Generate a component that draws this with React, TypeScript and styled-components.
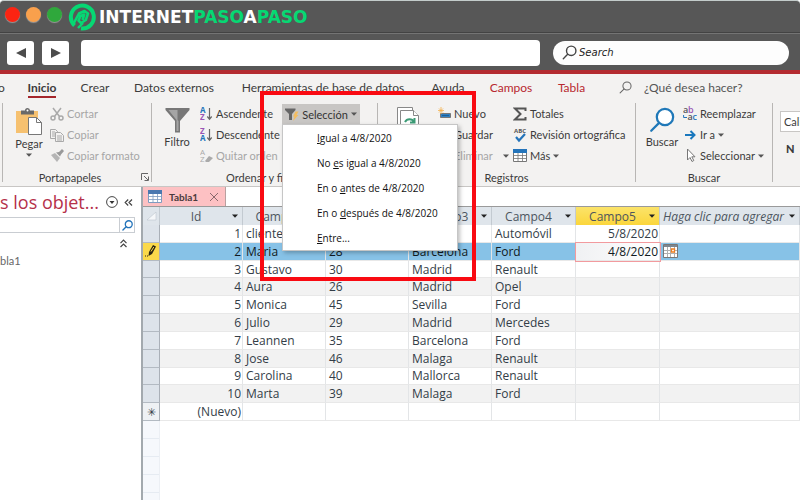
import React from "react";
import styled, { createGlobalStyle, css } from "styled-components";

const GlobalStyle = createGlobalStyle`
  * { box-sizing: border-box; }
  body {
    margin: 0;
    background: #fff;
    font-family: Lato, "Open Sans", sans-serif;
    font-size: 11px;
    color: #3c3c3c;
  }
  button, input {
    font: inherit;
    color: inherit;
    margin: 0;
    padding: 0;
    border: 0;
    background: none;
  }
  svg { display: block; flex: none; }
`;

const Page = styled.div`
  position: relative;
  display: flex;
  flex-direction: column;
  min-height: 100vh;
  overflow: hidden;
  white-space: nowrap;
`;

/* ---------- browser frame ---------- */

const TitleBar = styled.header`
  display: flex;
  align-items: center;
  height: 33px;
  padding: 0 5px;
  gap: 6px;
  background: #575757;
  border-top: 1px solid #c3cccb;
  border-bottom: 1px solid #434343;
  border-radius: 4px 4px 0 0;
`;

const Light = styled.button<{ $color: string }>`
  width: 15px;
  height: 15px;
  margin-bottom: 4px;
  border-radius: 50%;
  background: ${(p) => p.$color};
  box-shadow: 0 1px 1px #999;
`;

const Brand = styled.div`
  display: flex;
  align-items: center;
  gap: 3px;
  font-family: "DejaVu Sans", sans-serif;
  font-size: 17px;
  line-height: 20px;
  font-weight: 700;
  color: #fff;
`;

const BrandAccent = styled.span`
  color: #06d873;
`;

const AddressBar = styled.div`
  display: flex;
  align-items: center;
  height: 37px;
  padding: 1px 11px 0 7px;
  background: #575757;
  border-top: 1px solid #747474;
`;

const NavButton = styled.button`
  display: flex;
  align-items: center;
  justify-content: center;
  width: 27px;
  height: 24px;
  margin-right: 8px;
  border-radius: 3px;
  background: #fff;
`;

const UrlInput = styled.input`
  flex: 459 1 0;
  min-width: 0;
  height: 26px;
  margin: 0 13px 0 4px;
  border-radius: 4px;
  background: #fff;
`;

const SearchPill = styled.label`
  display: flex;
  align-items: center;
  flex: 227 1 0;
  min-width: 0;
  height: 24px;
  padding-left: 9px;
  gap: 2px;
  border-radius: 12px;
  background: #fdfdfd;
`;

const SearchInput = styled.input`
  flex: 1;
  min-width: 0;
  font-family: "DejaVu Sans", sans-serif;
  font-size: 10px;
  font-style: italic;
  outline: 0;
  &::placeholder { color: #222; opacity: 1; }
`;

/* ---------- ribbon ---------- */

const Ribbon = styled.section`
  background: #f3f2f1;
  border-top: 4px solid #b32b30;
  border-bottom: 1px solid #c8c6c4;
`;

const Tabs = styled.nav`
  display: flex;
  height: 29px;
  padding-top: 2px;
  gap: 25px;
  font-size: 12px;
`;

const Tab = styled.button<{ $w: number; $tone?: "active" | "context" }>`
  width: ${(p) => p.$w}px;
  height: 22px;
  display: flex;
  align-items: center;
  justify-content: center;
  ${(p) =>
    p.$tone === "active" &&
    css`
      font-weight: 700;
      color: #3b3b3b;
      border-bottom: 2px solid #a4262c;
      padding-top: 2px;
    `}
  ${(p) =>
    p.$tone === "context" &&
    css`
      color: #b8282f;
    `}
`;

const TellMe = styled.button`
  display: flex;
  align-items: center;
  gap: 12px;
  height: 22px;
  margin-left: 9px;
  color: #555;
`;

const Groups = styled.div`
  display: grid;
  grid-template-columns: 3px 149px 226px 258px 137px 1fr;
  padding-bottom: 4px;
`;

const Group = styled.div`
  display: flex;
  flex-direction: column;
  min-width: 0;
  height: 79px;
  border-right: 1px solid #b8b6b4;
  &:last-child { border-right: 0; }
`;

const GroupBody = styled.div<{ $pad?: number }>`
  display: flex;
  align-items: flex-start;
  flex: none;
  height: 67px;
  padding-left: ${(p) => p.$pad ?? 10}px;
`;

const GroupLabel = styled.div<{ $launcher?: boolean }>`
  position: relative;
  display: flex;
  justify-content: center;
  line-height: 16px;
  padding-right: ${(p) => (p.$launcher ? 14 : 0)}px;
`;

const Launcher = styled.button`
  position: absolute;
  right: 2px;
  top: 3px;
`;

const BigButton = styled.button<{ $w: number }>`
  display: flex;
  flex-direction: column;
  align-items: center;
  width: ${(p) => p.$w}px;
  padding-top: 4px;
  gap: 2px;
  line-height: 14px;
`;

const Stack = styled.div<{ $left?: number; $w?: number }>`
  display: flex;
  flex-direction: column;
  align-items: flex-start;
  margin-left: ${(p) => p.$left ?? 0}px;
  ${(p) => p.$w && `width: ${p.$w}px;`}
`;

const Command = styled.button`
  display: flex;
  align-items: center;
  height: 21px;
  gap: 3px;
  &:disabled { color: #a6a6a6; }
`;

const SelectionWrap = styled.div`
  position: relative;
  padding-top: 1px;
`;

const SelectionButton = styled.button`
  display: flex;
  align-items: center;
  justify-content: center;
  gap: 3px;
  width: 78px;
  height: 20px;
  background: #c8c6c4;
  color: #333;
`;

const Menu = styled.div`
  position: absolute;
  top: 21px;
  left: 0;
  z-index: 2;
  width: 176px;
  display: flex;
  flex-direction: column;
  background: #fff;
  border: 1px solid #c6c6c6;
  box-shadow: 2px 2px 4px rgba(0, 0, 0, 0.25);
`;

const MenuItem = styled.button`
  height: 25px;
  padding-left: 34px;
  text-align: left;
  font-family: "Open Sans", sans-serif;
  font-size: 10px;
  color: #111;
`;

const FontInput = styled.input`
  width: 90px;
  height: 21px;
  margin-top: 8px;
  padding-left: 3px;
  border: 1px solid #c8c6c4;
  background: #fff;
`;

const FontTools = styled.div`
  display: flex;
  flex-direction: column;
  align-items: flex-start;
  overflow: hidden;
`;

const BoldButton = styled.button`
  margin: 9px 0 0 6px;
  font-weight: 900;
  line-height: 16px;
`;

/* ---------- workspace ---------- */

const Workspace = styled.main`
  display: flex;
  flex: 1;
`;

const NavPane = styled.aside`
  width: 141px;
  flex: none;
  padding-right: 6px;
`;

const PaneHeader = styled.div`
  display: flex;
  align-items: center;
  justify-content: space-between;
  height: 30px;
`;

const PaneTitle = styled.h2`
  margin: 0;
  font-family: "Open Sans", sans-serif;
  font-size: 18px;
  line-height: 26px;
  font-weight: 400;
  color: #b5304a;
`;

const PaneTools = styled.div`
  display: flex;
  align-items: center;
  gap: 6px;
  padding-right: 2px;
`;

const PaneSearch = styled.div`
  display: flex;
  height: 16px;
  border: 1px solid #c9cdd2;
  border-left: 0;
`;

const PaneInput = styled.input`
  flex: 1;
  min-width: 0;
`;

const PaneSearchButton = styled.button`
  display: flex;
  align-items: center;
  justify-content: center;
  width: 15px;
  border-left: 1px solid #c9cdd2;
`;

const CollapseButton = styled.button`
  display: flex;
  margin: 6px 7px 0 auto;
`;

const PaneItem = styled.a`
  display: block;
  margin-top: 6px;
  line-height: 14px;
  color: #666;
  text-decoration: none;
`;

const DocPane = styled.section`
  display: flex;
  flex-direction: column;
  flex: 1;
  min-width: 0;
  border-left: 2px solid #a3a9ae;
`;

const DocTabs = styled.div`
  height: 20px;
  border-bottom: 1px solid #9a9a9a;
`;

const DocTab = styled.div`
  display: flex;
  align-items: center;
  width: 83px;
  height: 19px;
  padding: 0 6px 0 5px;
  background: #fdc1c3;
  border-right: 1px solid #b9a0a0;
  font-size: 10px;
  font-weight: 700;
  color: #4a3a3c;
`;

const DocTabName = styled.span`
  flex: 1;
  padding-left: 7px;
`;

const DataTable = styled.table`
  width: 100%;
  height: 214px;
  table-layout: fixed;
  border-collapse: separate;
  border-spacing: 0;
  font-family: "Open Sans", sans-serif;
  font-size: 12px;
  line-height: 15px;
  color: #333d47;
`;

const HeadCell = styled.th<{ $active?: boolean }>`
  height: 18px;
  padding: 0;
  font-weight: 400;
  color: #4d555e;
  background: ${(p) => (p.$active ? "linear-gradient(#fbe36a, #fbd63c)" : "#dfe5eb")};
  border-right: 1px solid #c3cad1;
`;

const HeadInner = styled.div`
  display: flex;
  align-items: center;
  padding: 0 4px 0 0;
`;

const HeadName = styled.span<{ $add?: boolean }>`
  flex: 1;
  text-align: center;
  ${(p) =>
    p.$add &&
    css`
      text-align: left;
      padding-left: 3px;
      font-style: italic;
    `}
`;

const Row = styled.tr<{ $state?: "even" | "selected" }>`
  background: ${(p) =>
    p.$state === "selected" ? "#87c2e7" : p.$state === "even" ? "#f2f2f2" : "#fff"};
  color: ${(p) => (p.$state === "selected" ? "#111a22" : "inherit")};
`;

const Cell = styled.td<{ $right?: boolean; $focus?: boolean }>`
  padding: 0 1px 0 3px;
  text-align: ${(p) => (p.$right ? "right" : "left")};
  border-right: 1px solid #e3e5e7;
  border-bottom: 1px solid #e8e8e8;
  ${(p) =>
    p.$focus &&
    css`
      background: linear-gradient(90deg, #f0f1f3, #fff);
      outline: 1px solid #f29a9e;
    `}
`;

const Selector = styled.th<{ $current?: boolean; $blank?: boolean }>`
  padding: 0;
  background: ${(p) => (p.$current ? "#fbd94b" : p.$blank ? "#eef1f4" : "#dde3ea")};
  border-right: 1px solid #aab0b8;
  border-bottom: 1px solid #b3bac2;
  font-weight: 400;
  font-size: 11px;
  & > svg { margin: 0 auto; }
`;

const EmptyGutter = styled.div`
  flex: 1;
  width: 17px;
  background: repeating-linear-gradient(#f6f8fc 0 17px, #e6ebf2 17px 18px);
  border-right: 1px solid #eceff4;
`;

/* Tutorial highlight drawn over the filter menu. */
const Highlight = styled.div`
  position: absolute;
  top: 91px;
  left: 260px;
  width: 216px;
  height: 190px;
  z-index: 3;
  border: 4px solid #f90a12;
  pointer-events: none;
`;

/* ---------- icons ---------- */

const Caret = ({ c = "#555" }: { c?: string }) => (
  <svg width="6" height="4" viewBox="0 0 6 4"><path d="M0 0.5h6L3 3.7z" fill={c} /></svg>
);

const Lens = ({ size, color, width = 1.3, fill = "none" }: { size: number; color: string; width?: number; fill?: string }) => (
  <svg width={size} height={size} viewBox="0 0 14 14" fill={fill} stroke={color} strokeWidth={width} strokeLinecap="round">
    <circle cx="8.6" cy="5.4" r="4.4" /><path d="M5.3 8.7L1.2 12.8" />
  </svg>
);

const Logo = () => (
  <svg width="28" height="28" viewBox="0 0 28 28" fill="none" stroke="#06d873">
    <path d="M6.500 22.500A11.500 11.500 0 1 1 13 25.500" strokeWidth="4" />
    <path d="M5 21.500L11 10.500L16.500 8L20 10.500L17.800 17L13 20L10.500 17.500L12.500 13L16.200 11.500L14.500 17" strokeWidth="2.600" strokeLinejoin="round" />
    <path d="M10 25L15 20" strokeWidth="2.400" />
  </svg>
);

const Clipboard = () => (
  <svg width="26" height="28" viewBox="0 0 26 28">
    <path d="M0 4h22v22H0z" fill="#f6c170" />
    <path d="M5 3.5h4a2.5 2.5 0 0 1 5 0h4v4H5z" fill="#696969" /><circle cx="11.5" cy="3.4" r="1" fill="#fff" />
    <path d="M12.5 10.5h8l5 5v12h-13z" fill="#fff" stroke="#777" /><path d="M20.5 10.5v5h5" fill="none" stroke="#777" />
  </svg>
);

const Scissors = () => (
  <svg width="14" height="14" viewBox="0 0 14 14" fill="none" stroke="#a9a9a9" strokeWidth="1.5">
    <path d="M3 1l6.5 8.5M11 1L4.5 9.5" /><circle cx="3" cy="11" r="2" /><circle cx="11" cy="11" r="2" />
  </svg>
);

const CopyIcon = () => (
  <svg width="14" height="14" viewBox="0 0 14 14" fill="#f3f2f1" stroke="#a9a9a9">
    <path d="M.5 1.5h5l2 2v7h-7z" /><path d="M2 4h3M2 6h3M2 8h3" />
    <path d="M5.500 4.500h5l3 3v6h-8z" /><path d="M7 8h5M7 10h5M7 12h5" />
  </svg>
);

const Brush = () => (
  <svg width="14" height="14" viewBox="0 0 14 14">
    <path d="M1 6l4-2 5 5-3 4z" fill="#b5b5b5" /><path d="M6 3.500l4 4 1-2 3-3.500-2-2-3 3z" fill="#999" />
  </svg>
);

const Funnel = () => (
  <svg width="25" height="26" viewBox="0 0 25 26">
    <path d="M.5 1h24v2L15 14v11.500h-5V14L.5 3z" fill="#777" /><path d="M3.500 3h9v10l1 1v10h-2V13z" fill="#a5a5a5" />
  </svg>
);

const FunnelBolt = () => (
  <svg width="14" height="13" viewBox="0 0 14 13">
    <path d="M0 .5h10.500v1.500L7 6v6H4V6L0 2z" fill="#666" /><path d="M10.500 3.500h3L11.500 7h2L8 13l1.500-4.500H8z" fill="#f3bd60" />
  </svg>
);

const SortIcon = ({ top, bottom, topColor, bottomColor }: { top: string; bottom: string; topColor: string; bottomColor: string }) => (
  <svg width="13" height="16" viewBox="0 0 13 16" fontFamily="Open Sans, sans-serif" fontSize="8" fontWeight="700">
    <text x="0" y="7" fill={topColor}>{top}</text><text x="0" y="14" fill={bottomColor}>{bottom}</text>
    <path d="M9.500 2v11M7.300 10.500l2.200 2.700 2.200-2.700" stroke="#666" strokeWidth="1.200" fill="none" />
  </svg>
);

const ClearSort = () => (
  <svg width="13" height="16" viewBox="0 0 13 16" fontFamily="Open Sans, sans-serif" fontSize="8" fill="#aaa">
    <text x="0" y="7">A</text><text x="0" y="14">Z</text><path d="M5 13l4-5 4 2-4 4H6z" />
  </svg>
);

const RefreshDoc = () => (
  <svg width="24" height="27" viewBox="0 0 24 27" fill="#fff" stroke="#888">
    <path d="M.5.500h15v21H.5z" /><path d="M3.500 3.500h13l5 5v18h-18z" /><path d="M16.500 3.500v5h5" />
    <path d="M8 15a5 5 0 0 1 9 0M17.500 11v4.500H13M17 20a5 5 0 0 1-9 0" fill="none" stroke="#3c9b76" strokeWidth="2" />
  </svg>
);

const NewRecord = () => (
  <svg width="13" height="14" viewBox="0 0 13 14">
    <path d="M2.500 6.500h10v4h-10z" fill="#2f7fc1" stroke="#777" /><path d="M4 8.500h7" stroke="#195f9b" />
    <path d="M3 0v7M0 3.500h6M1 1.500l4 4M5 1.500l-4 4" stroke="#f2b04c" strokeWidth=".8" />
  </svg>
);

const Blank = ({ w = 13 }: { w?: number }) => <svg width={w} height="14" />;

const Sigma = () => (
  <svg width="14" height="14" viewBox="0 0 14 14" fill="none" stroke="#555" strokeWidth="2">
    <path d="M12.500 4V1.500H2L7.500 7L2 12.500h10.500V10" />
  </svg>
);

const Spelling = () => (
  <svg width="14" height="16" viewBox="0 0 14 16">
    <text x="1" y="5.500" fontFamily="Open Sans, sans-serif" fontSize="6" fontWeight="700" fill="#555">ABC</text>
    <path d="M3 10l3 3.500L12 7" fill="none" stroke="#2474ba" strokeWidth="2.200" />
  </svg>
);

const GridIcon = ({ head = "#2474ba", line = "#777" }: { head?: string; line?: string }) => (
  <svg width="14" height="13" viewBox="0 0 14 13">
    <path d="M.5.500h13v12H.5z" fill="#fff" stroke={line} /><path d="M0 0h14v4H0z" fill={head} />
    <path d="M0 6.500h14M0 9.500h14M5 4v9M9.500 4v9" stroke={line} strokeWidth=".8" />
  </svg>
);

const ReplaceIcon = () => (
  <svg width="14" height="15" viewBox="0 0 14 15" fontFamily="Open Sans, sans-serif" fontSize="9" fontWeight="600">
    <text x="0" y="7" fill="#555">a</text><text x="5" y="7" fill="#9a55b5">b</text>
    <text x="4.500" y="14" fill="#555">a</text><text x="9.500" y="14" fill="#2474ba">c</text>
    <path d="M.6 9v2.500H4" stroke="#2474ba" fill="none" />
  </svg>
);

const GoIcon = () => (
  <svg width="14" height="12" viewBox="0 0 14 12" fill="none" stroke="#1977bd" strokeWidth="2">
    <path d="M2 6h9M7.500 2l4 4-4 4" />
  </svg>
);

const Pointer = () => (
  <svg width="14" height="15" viewBox="0 0 14 15" fill="#fff" stroke="#777">
    <path d="M4.500 1v11l2.500-2.500 2 4 1.800-1-2-3.700H12z" />
  </svg>
);

const Pencil = () => (
  <svg width="12" height="14" viewBox="0 0 12 14">
    <path d="M4 8l4-7 3 1.500L7 10l-3.500 2z" fill="#2d2714" /><path d="M6 7.500L8.800 3" stroke="#fbd94b" />
    <path d="M0 12h3" stroke="#2d2714" strokeDasharray="1 1" />
  </svg>
);

const CalendarIcon = () => (
  <svg width="15" height="14" viewBox="0 0 15 14">
    <path d="M.5.500h14v13H.5z" fill="#fff" stroke="#777" /><path d="M1 1h13v2H1z" fill="#7c8790" />
    <path d="M1 6.500h13M1 9.500h13M4.500 3v10M7.500 3v10M11.500 3v10" stroke="#b0b0b0" />
    <path d="M8.500 5h3v3h-3z" fill="#fff" stroke="#ee7f21" strokeWidth="1.300" />
  </svg>
);

const Chevrons = ({ up }: { up?: boolean }) => (
  <svg width="9" height="9" viewBox="0 0 9 9" fill="none" stroke="#444" strokeWidth="1.200">
    <path d={up ? "M1.500 4.200l3-3 3 3M1.500 8l3-3 3 3" : "M4.200 1.500l-3 3 3 3M8 1.500l-3 3 3 3"} />
  </svg>
);

/* ---------- data ---------- */

const rows = [
  ["1", "cliente", "25", "Leon", "Automóvil", "5/8/2020"],
  ["2", "Maria", "28", "Barcelona", "Ford", "4/8/2020"],
  ["3", "Gustavo", "30", "Madrid", "Renault", ""],
  ["4", "Aura", "26", "Madrid", "Opel", ""],
  ["5", "Monica", "45", "Sevilla", "Ford", ""],
  ["6", "Julio", "29", "Madrid", "Mercedes", ""],
  ["7", "Leannen", "35", "Barcelona", "Ford", ""],
  ["8", "Jose", "46", "Malaga", "Renault", ""],
  ["9", "Carolina", "40", "Mallorca", "Renault", ""],
  ["10", "Marta", "39", "Malaga", "Ford", ""],
  ["(Nuevo)", "", "", "", "", ""],
];

const heads = ["Id", "Campo1", "Campo2", "Campo3", "Campo4", "Campo5"];

export default function App() {
  return (
    <>
      <GlobalStyle />
      <Page>
        <TitleBar>
          <Light $color="#fb2412" aria-label="Cerrar" />
          <Light $color="#f9a04c" aria-label="Minimizar" />
          <Light $color="#2fa83c" aria-label="Maximizar" />
          <Brand>
            <Logo />
            <span>INTERNET<BrandAccent>PASO</BrandAccent>A<BrandAccent>PASO</BrandAccent></span>
          </Brand>
        </TitleBar>
        <AddressBar>
          <NavButton aria-label="Atrás"><svg width="10" height="10" viewBox="0 0 10 10"><path d="M10 0v10L0 5z" fill="#4c4c4c" /></svg></NavButton>
          <NavButton aria-label="Adelante"><svg width="10" height="10" viewBox="0 0 10 10"><path d="M0 0v10l10-5z" fill="#4c4c4c" /></svg></NavButton>
          <UrlInput aria-label="Dirección" />
          <SearchPill>
            <Lens size={15} color="#444" />
            <SearchInput placeholder="Search" aria-label="Search" />
          </SearchPill>
        </AddressBar>

        <Ribbon>
          <Tabs>
            <Tab $w={3} aria-label="Archivo">o</Tab>
            <Tab $w={28} $tone="active">Inicio</Tab>
            <Tab $w={28}>Crear</Tab>
            <Tab $w={80}>Datos externos</Tab>
            <Tab $w={168}>Herramientas de base de datos</Tab>
            <Tab $w={32}>Ayuda</Tab>
            <Tab $w={44} $tone="context">Campos</Tab>
            <Tab $w={27} $tone="context">Tabla</Tab>
            <TellMe><Lens size={13} color="#666" width={1.1} />¿Qué desea hacer?</TellMe>
          </Tabs>
          <Groups>
            <Group />
            <Group>
              <GroupBody>
                <BigButton $w={32}><Clipboard />Pegar<Caret /></BigButton>
                <Stack $left={5}>
                  <Command disabled><Scissors />Cortar</Command>
                  <Command disabled><CopyIcon />Copiar</Command>
                  <Command disabled><Brush />Copiar formato</Command>
                </Stack>
              </GroupBody>
              <GroupLabel $launcher>
                Portapapeles
                <Launcher aria-label="Opciones del portapapeles">
                  <svg width="8" height="8" viewBox="0 0 8 8" fill="none" stroke="#666"><path d="M.5 7V.5H7M3 3l4 4M7.500 3.500v4h-4" /></svg>
                </Launcher>
              </GroupLabel>
            </Group>
            <Group>
              <GroupBody>
                <BigButton $w={30}><Funnel />Filtro</BigButton>
                <Stack $left={8} $w={82}>
                  <Command><SortIcon top="A" bottom="Z" topColor="#2474ba" bottomColor="#9a55b5" />Ascendente</Command>
                  <Command><SortIcon top="Z" bottom="A" topColor="#9a55b5" bottomColor="#2474ba" />Descendente</Command>
                  <Command disabled><ClearSort />Quitar orden</Command>
                </Stack>
                <SelectionWrap>
                  <SelectionButton aria-expanded="true" aria-haspopup="menu"><FunnelBolt />Selección<Caret /></SelectionButton>
                  <Menu role="menu">
                    <MenuItem role="menuitem"><u>I</u>gual a 4/8/2020</MenuItem>
                    <MenuItem role="menuitem">No <u>e</u>s igual a 4/8/2020</MenuItem>
                    <MenuItem role="menuitem">En o <u>a</u>ntes de 4/8/2020</MenuItem>
                    <MenuItem role="menuitem">En o <u>d</u>espués de 4/8/2020</MenuItem>
                    <MenuItem role="menuitem"><u>E</u>ntre...</MenuItem>
                  </Menu>
                </SelectionWrap>
              </GroupBody>
              <GroupLabel>Ordenar y filtrar</GroupLabel>
            </Group>
            <Group>
              <GroupBody $pad={12}>
                <BigButton $w={38}><RefreshDoc />Actualizar</BigButton>
                <Stack $left={10} $w={75}>
                  <Command><NewRecord />Nuevo</Command>
                  <Command><Blank />Guardar</Command>
                  <Command disabled><Blank />Eliminar<Blank w={4} /><Caret /></Command>
                </Stack>
                <Stack>
                  <Command><Sigma />Totales</Command>
                  <Command><Spelling />Revisión ortográfica</Command>
                  <Command><GridIcon />Más<Caret /></Command>
                </Stack>
              </GroupBody>
              <GroupLabel>Registros</GroupLabel>
            </Group>
            <Group>
              <GroupBody>
                <BigButton $w={32}><Lens size={26} color="#1f78b8" width={1.2} fill="#fff" />Buscar</BigButton>
                <Stack $left={5}>
                  <Command><ReplaceIcon />Reemplazar</Command>
                  <Command><GoIcon />Ir a<Caret /></Command>
                  <Command><Pointer />Seleccionar<Caret /></Command>
                </Stack>
              </GroupBody>
              <GroupLabel>Buscar</GroupLabel>
            </Group>
            <Group>
              <GroupBody $pad={7}>
                <FontTools>
                  <FontInput defaultValue="Calibri" aria-label="Fuente" />
                  <BoldButton aria-label="Negrita">N</BoldButton>
                </FontTools>
              </GroupBody>
            </Group>
          </Groups>
        </Ribbon>

        <Workspace>
          <NavPane>
            <PaneHeader>
              <PaneTitle>s los objet...</PaneTitle>
              <PaneTools>
                <button aria-label="Opciones">
                  <svg width="12" height="12" viewBox="0 0 12 12" fill="none" stroke="#444"><circle cx="6" cy="6" r="5.400" /><path d="M3.500 5h5L6 8z" fill="#333" stroke="none" /></svg>
                </button>
                <button aria-label="Contraer panel"><Chevrons /></button>
              </PaneTools>
            </PaneHeader>
            <PaneSearch>
              <PaneInput aria-label="Buscar objetos" />
              <PaneSearchButton aria-label="Buscar"><Lens size={11} color="#2474ba" width={1.7} /></PaneSearchButton>
            </PaneSearch>
            <CollapseButton aria-label="Contraer grupo"><Chevrons up /></CollapseButton>
            <PaneItem href="#tabla1">bla1</PaneItem>
          </NavPane>

          <DocPane>
            <DocTabs>
              <DocTab>
                <GridIcon head="#4a78b0" line="#7f9cc0" />
                <DocTabName>Tabla1</DocTabName>
                <button aria-label="Cerrar tabla">
                  <svg width="10" height="10" viewBox="0 0 10 10" stroke="#8a6a6c"><path d="M1 1l8 8M9 1L1 9" /></svg>
                </button>
              </DocTab>
            </DocTabs>
            <DataTable>
              <colgroup>
                <col width="17" /><col width="83" /><col width="83" /><col width="83" />
                <col width="83" /><col width="84" /><col width="84" /><col />
              </colgroup>
              <thead>
                <tr>
                  <HeadCell aria-label="Seleccionar todo"><svg width="16" height="14"><path d="M13 3v8H4z" fill="#f5f7f9" stroke="#bcc4cc" strokeWidth=".6" /></svg></HeadCell>
                  {heads.map((h) => (
                    <HeadCell key={h} $active={h === "Campo5"}>
                      <HeadInner><HeadName>{h}</HeadName><Caret c="#222" /></HeadInner>
                    </HeadCell>
                  ))}
                  <HeadCell><HeadInner><HeadName $add>Haga clic para agregar</HeadName><Caret c="#222" /></HeadInner></HeadCell>
                </tr>
              </thead>
              <tbody>
                {rows.map((r, i) => {
                  const selected = i === 1;
                  const isNew = i === rows.length - 1;
                  return (
                    <Row key={r[0]} $state={selected ? "selected" : i % 2 && !isNew ? "even" : undefined}>
                      <Selector $current={selected} $blank={isNew}>{selected ? <Pencil /> : isNew ? "✳" : null}</Selector>
                      {r.map((v, c) => (
                        <Cell key={c} $right={c === 0 || c === 5} $focus={selected && c === 5}>{v}</Cell>
                      ))}
                      <Cell>{selected && <CalendarIcon />}</Cell>
                    </Row>
                  );
                })}
              </tbody>
            </DataTable>
            <EmptyGutter />
          </DocPane>
        </Workspace>
        <Highlight />
      </Page>
    </>
  );
}
